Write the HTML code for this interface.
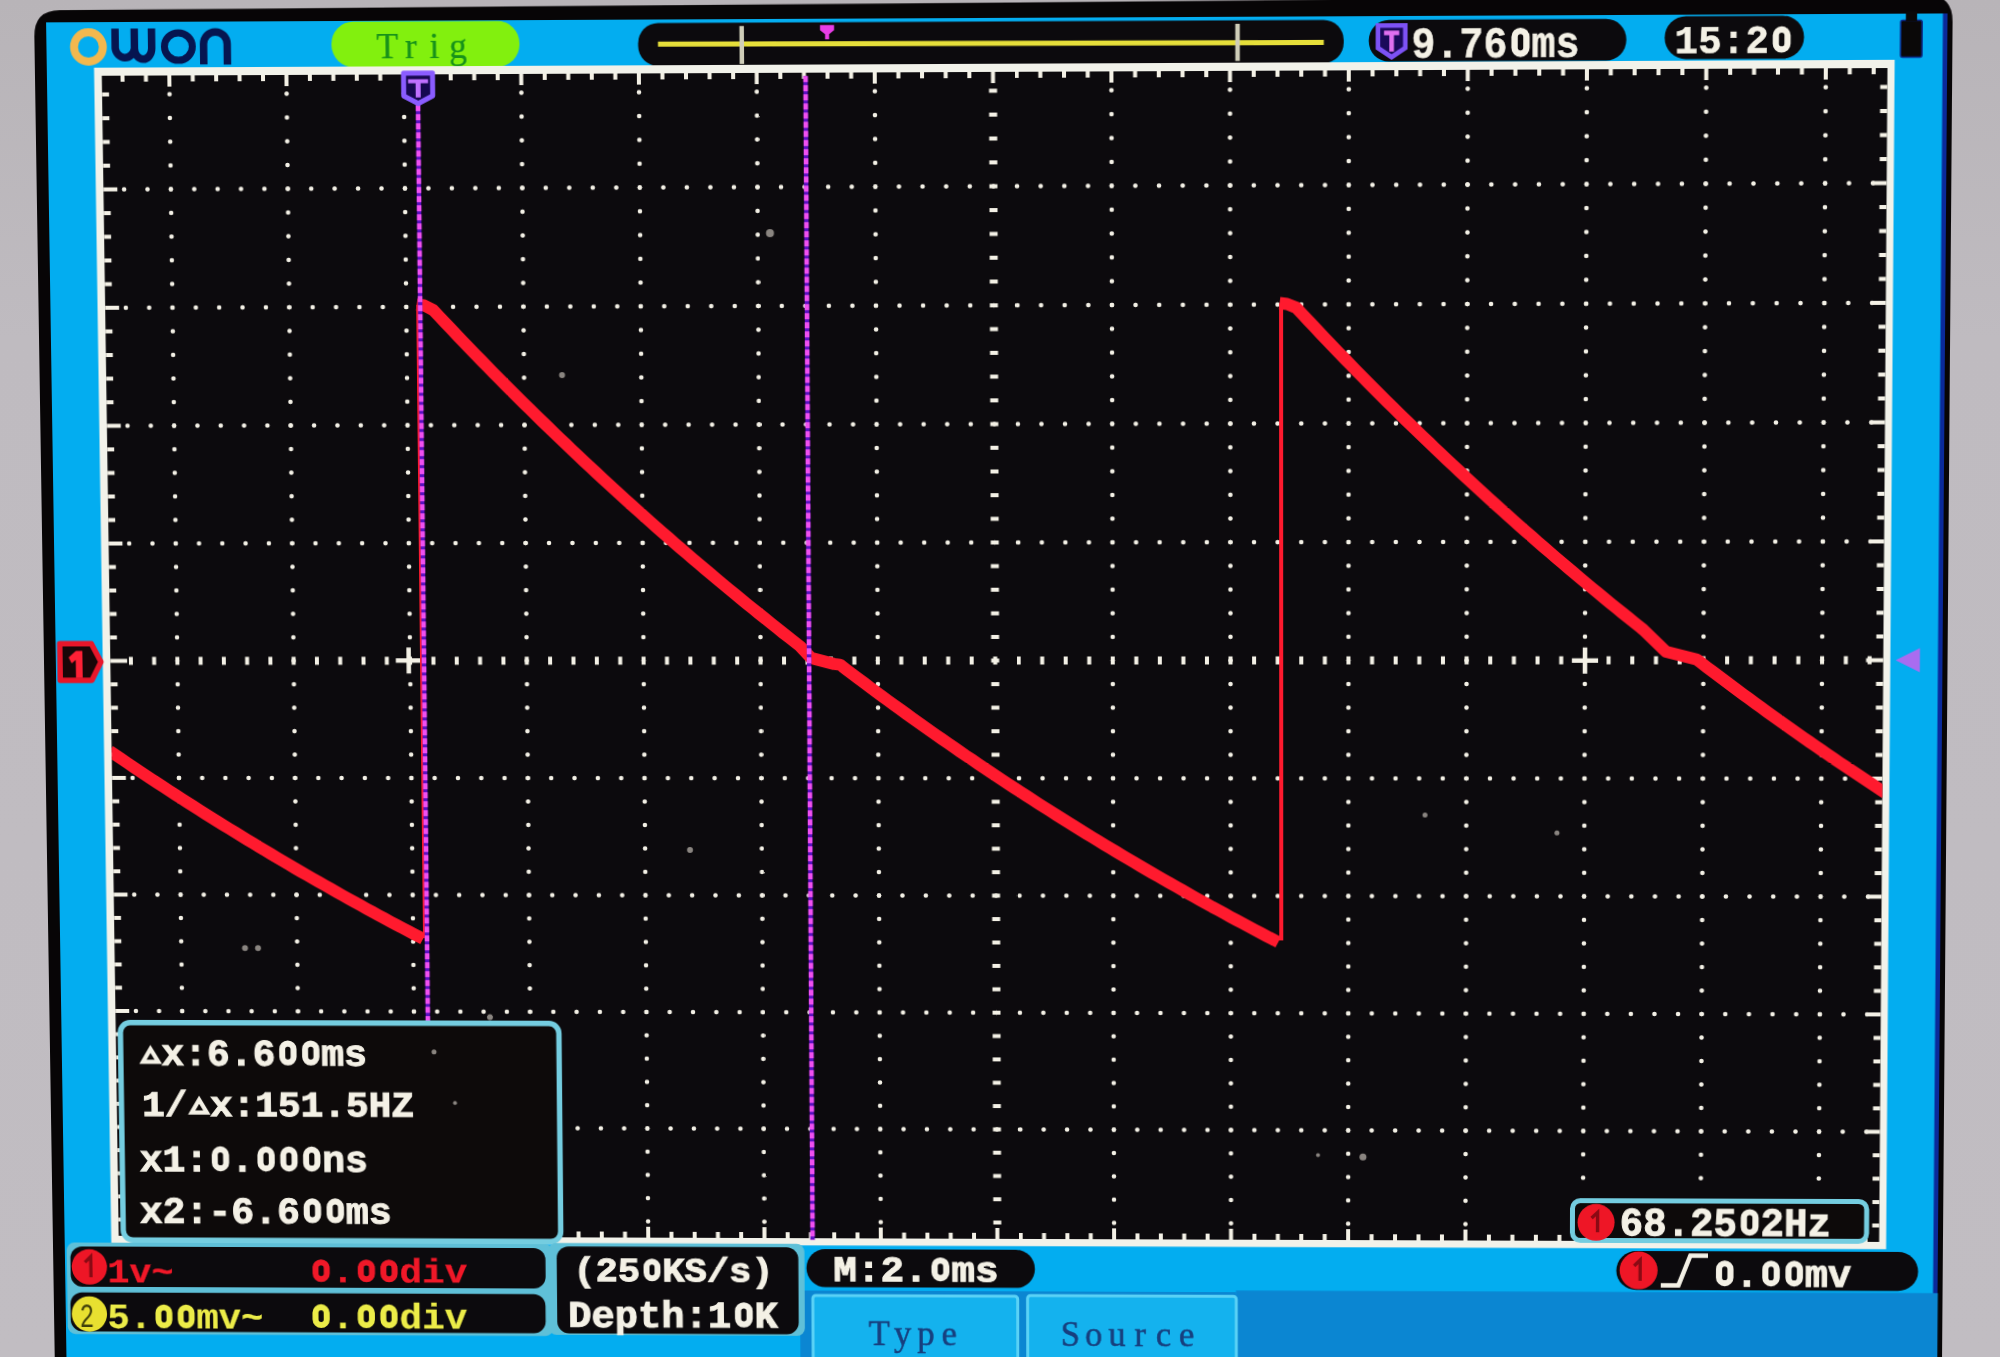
<!DOCTYPE html>
<html><head><meta charset="utf-8"><title>Oscilloscope</title>
<style>
html,body{margin:0;padding:0;overflow:hidden;width:2000px;height:1357px;}
#wrap{position:absolute;left:0;top:0;width:2000px;height:1357px;overflow:hidden;}
body{width:2000px;height:1357px;overflow:hidden;position:relative;background:#c0bcc1;font-family:"Liberation Sans",sans-serif;}
#bg{position:absolute;left:0;top:0;width:2000px;height:1357px;background:linear-gradient(180deg,#b8b4b8 0%,#bfbbc0 25%,#c1bdc2 100%);}
#scene{position:absolute;left:0;top:0;width:2000px;height:1420px;transform-origin:0 0;transform:matrix3d(0.994577479,-0.00482079311,0,-6.70521566e-06,0.0160254902,1.01289187,0,1.22989897e-05,0,0,1,0,-4.04642682,-2.71156599,0,1);}
</style></head><body>
<div id="wrap">
<div id="bg"></div>
<div id="scene">
<svg width="2000" height="1420" viewBox="0 0 2000 1420" style="position:absolute;left:0;top:0">
<path d="M38,1420 V39 Q38,13 64,13 L1916,7 Q1942,7 1942,33 V1420 Z" fill="#070506"/>
<rect x="50" y="25" width="1884" height="1400" fill="#03adf0"/>
<rect x="1932.5" y="25" width="4.5" height="1400" fill="#0a2a9a"/>
<rect x="1235.4" y="1292.3" width="701.9" height="107.6" rx="0" fill="#0b86d2" />
<rect x="796.1" y="1294" width="439.3" height="109.1" rx="0" fill="#0b86d2" />
<circle cx="92.2" cy="49.5" r="14.5" fill="none" stroke="#f2b84e" stroke-width="8"/>
<path d="M119.1,31.4 V51.1 A9.75,10.5 0 0 0 138.4,51.2 V31.5 M138.4,51.2 A8.6,10.5 0 0 0 155.7,51.3 V31.5" fill="none" stroke="#061550" stroke-width="7.5"/>
<ellipse cx="182.5" cy="49.5" rx="14" ry="13.6" fill="none" stroke="#061550" stroke-width="7"/>
<path d="M207.8,67.3 V47.1 A11.7,11.8 0 0 1 231.5,47.2 V67.4" fill="none" stroke="#061550" stroke-width="7.5"/>
<rect x="336" y="25.7" width="188.1" height="45" rx="22" fill="#82f00e" />
<g font-family="Liberation Serif" font-size="35.7" fill="#17921a" stroke="#17921a" stroke-width="0.25" text-anchor="middle"><text x="391.8" y="61.7">T</text><text x="415.4" y="61.7">r</text><text x="439" y="61.7">i</text><text x="462.6" y="61.7">g</text></g>
<rect x="642.5" y="28.4" width="700.5" height="42.4" rx="20" fill="#0c0a0d" />
<line x1="662.3" y1="49.3" x2="1323.3" y2="50.6" stroke="#e6df3a" stroke-width="5"/>
<line x1="745.8" y1="31.8" x2="745.8" y2="69.1" stroke="#cfcdb8" stroke-width="4.5"/>
<line x1="1238" y1="31.9" x2="1238" y2="68.3" stroke="#cfcdb8" stroke-width="4.5"/>
<path d="M823.8,31.2 h14 v5 l-5,4 v5 h-4 v-5 l-5,-4 z" fill="#e83ee6"/>
<rect x="1367.7" y="28.8" width="254" height="40.8" rx="20" fill="#0c0a0d" />
<path d="M1376.8,34.2 h27 v22 l-13.5,9 l-13.5,-9 z" fill="#1a0a5a" stroke="#7d52f5" stroke-width="4.5"/>
<path d="M1382.8,39.2 h15 v4.5 h-5.2 v16 h-4.6 v-16 h-5.2 z" fill="#e070f0"/>
<text transform="translate(1409.8 65.7) scale(0.9207 1)" font-family="Liberation Mono" font-weight="bold" font-size="42.9" fill="#f4f1e6" stroke="#f4f1e6" stroke-width="0.6" xml:space="preserve">9.76 ms</text>
<rect x="1511.6" y="40.1" width="11.7" height="22.4" rx="5.9" fill="none" stroke="#f4f1e6" stroke-width="6.3"/>
<rect x="1659.4" y="26.4" width="137" height="42" rx="21" fill="#0c0a0d" />
<text transform="translate(1669.1 62.4) scale(1.0105 1)" font-family="Liberation Mono" font-weight="bold" font-size="38.3" fill="#f4f1e6" stroke="#f4f1e6" stroke-width="0.6" xml:space="preserve">15:2 </text>
<rect x="1768.7" y="39.9" width="11.5" height="19.5" rx="5.7" fill="none" stroke="#f4f1e6" stroke-width="6.1"/>
<rect x="1891.2" y="31.4" width="21" height="36" rx="2" fill="#0a0808" stroke="#0a2a8a" stroke-width="1.5"/>
<rect x="1896.2" y="22.4" width="11" height="10" fill="#0a0808"/>
<rect x="97.5" y="70" width="1788" height="1178.3" rx="0" fill="#f2f2ea" />
<rect x="105.2" y="78" width="1773.3" height="1163" rx="0" fill="#0c0a0d" />
<g fill="#f4f1e6"><rect x="124" y="78" width="4" height="6"/><rect x="124" y="1235" width="4" height="6"/><rect x="147.5" y="78" width="4" height="6"/><rect x="147.5" y="1235" width="4" height="6"/><rect x="171" y="78" width="4" height="11"/><rect x="171" y="1230" width="4" height="11"/><rect x="194.5" y="78" width="4" height="6"/><rect x="194.5" y="1235" width="4" height="6"/><rect x="218" y="78" width="4" height="6"/><rect x="218" y="1235" width="4" height="6"/><rect x="241.5" y="78" width="4" height="6"/><rect x="241.5" y="1235" width="4" height="6"/><rect x="265" y="78" width="4" height="6"/><rect x="265" y="1235" width="4" height="6"/><rect x="288.5" y="78" width="4" height="11"/><rect x="288.5" y="1230" width="4" height="11"/><rect x="312" y="78" width="4" height="6"/><rect x="312" y="1235" width="4" height="6"/><rect x="335.5" y="78" width="4" height="6"/><rect x="335.5" y="1235" width="4" height="6"/><rect x="359" y="78" width="4" height="6"/><rect x="359" y="1235" width="4" height="6"/><rect x="382.5" y="78" width="4" height="6"/><rect x="382.5" y="1235" width="4" height="6"/><rect x="406" y="78" width="4" height="11"/><rect x="406" y="1230" width="4" height="11"/><rect x="429.5" y="78" width="4" height="6"/><rect x="429.5" y="1235" width="4" height="6"/><rect x="453" y="78" width="4" height="6"/><rect x="453" y="1235" width="4" height="6"/><rect x="476.5" y="78" width="4" height="6"/><rect x="476.5" y="1235" width="4" height="6"/><rect x="500" y="78" width="4" height="6"/><rect x="500" y="1235" width="4" height="6"/><rect x="523.5" y="78" width="4" height="11"/><rect x="523.5" y="1230" width="4" height="11"/><rect x="547" y="78" width="4" height="6"/><rect x="547" y="1235" width="4" height="6"/><rect x="570.5" y="78" width="4" height="6"/><rect x="570.5" y="1235" width="4" height="6"/><rect x="594" y="78" width="4" height="6"/><rect x="594" y="1235" width="4" height="6"/><rect x="617.5" y="78" width="4" height="6"/><rect x="617.5" y="1235" width="4" height="6"/><rect x="641" y="78" width="4" height="11"/><rect x="641" y="1230" width="4" height="11"/><rect x="664.5" y="78" width="4" height="6"/><rect x="664.5" y="1235" width="4" height="6"/><rect x="688" y="78" width="4" height="6"/><rect x="688" y="1235" width="4" height="6"/><rect x="711.5" y="78" width="4" height="6"/><rect x="711.5" y="1235" width="4" height="6"/><rect x="735" y="78" width="4" height="6"/><rect x="735" y="1235" width="4" height="6"/><rect x="758.5" y="78" width="4" height="11"/><rect x="758.5" y="1230" width="4" height="11"/><rect x="782" y="78" width="4" height="6"/><rect x="782" y="1235" width="4" height="6"/><rect x="805.5" y="78" width="4" height="6"/><rect x="805.5" y="1235" width="4" height="6"/><rect x="829" y="78" width="4" height="6"/><rect x="829" y="1235" width="4" height="6"/><rect x="852.5" y="78" width="4" height="6"/><rect x="852.5" y="1235" width="4" height="6"/><rect x="876" y="78" width="4" height="11"/><rect x="876" y="1230" width="4" height="11"/><rect x="899.5" y="78" width="4" height="6"/><rect x="899.5" y="1235" width="4" height="6"/><rect x="923" y="78" width="4" height="6"/><rect x="923" y="1235" width="4" height="6"/><rect x="946.5" y="78" width="4" height="6"/><rect x="946.5" y="1235" width="4" height="6"/><rect x="970" y="78" width="4" height="6"/><rect x="970" y="1235" width="4" height="6"/><rect x="993.5" y="78" width="4" height="11"/><rect x="993.5" y="1230" width="4" height="11"/><rect x="1017" y="78" width="4" height="6"/><rect x="1017" y="1235" width="4" height="6"/><rect x="1040.5" y="78" width="4" height="6"/><rect x="1040.5" y="1235" width="4" height="6"/><rect x="1064" y="78" width="4" height="6"/><rect x="1064" y="1235" width="4" height="6"/><rect x="1087.5" y="78" width="4" height="6"/><rect x="1087.5" y="1235" width="4" height="6"/><rect x="1111" y="78" width="4" height="11"/><rect x="1111" y="1230" width="4" height="11"/><rect x="1134.5" y="78" width="4" height="6"/><rect x="1134.5" y="1235" width="4" height="6"/><rect x="1158" y="78" width="4" height="6"/><rect x="1158" y="1235" width="4" height="6"/><rect x="1181.5" y="78" width="4" height="6"/><rect x="1181.5" y="1235" width="4" height="6"/><rect x="1205" y="78" width="4" height="6"/><rect x="1205" y="1235" width="4" height="6"/><rect x="1228.5" y="78" width="4" height="11"/><rect x="1228.5" y="1230" width="4" height="11"/><rect x="1252" y="78" width="4" height="6"/><rect x="1252" y="1235" width="4" height="6"/><rect x="1275.5" y="78" width="4" height="6"/><rect x="1275.5" y="1235" width="4" height="6"/><rect x="1299" y="78" width="4" height="6"/><rect x="1299" y="1235" width="4" height="6"/><rect x="1322.5" y="78" width="4" height="6"/><rect x="1322.5" y="1235" width="4" height="6"/><rect x="1346" y="78" width="4" height="11"/><rect x="1346" y="1230" width="4" height="11"/><rect x="1369.5" y="78" width="4" height="6"/><rect x="1369.5" y="1235" width="4" height="6"/><rect x="1393" y="78" width="4" height="6"/><rect x="1393" y="1235" width="4" height="6"/><rect x="1416.5" y="78" width="4" height="6"/><rect x="1416.5" y="1235" width="4" height="6"/><rect x="1440" y="78" width="4" height="6"/><rect x="1440" y="1235" width="4" height="6"/><rect x="1463.5" y="78" width="4" height="11"/><rect x="1463.5" y="1230" width="4" height="11"/><rect x="1487" y="78" width="4" height="6"/><rect x="1487" y="1235" width="4" height="6"/><rect x="1510.5" y="78" width="4" height="6"/><rect x="1510.5" y="1235" width="4" height="6"/><rect x="1534" y="78" width="4" height="6"/><rect x="1534" y="1235" width="4" height="6"/><rect x="1557.5" y="78" width="4" height="6"/><rect x="1557.5" y="1235" width="4" height="6"/><rect x="1581" y="78" width="4" height="11"/><rect x="1581" y="1230" width="4" height="11"/><rect x="1604.5" y="78" width="4" height="6"/><rect x="1604.5" y="1235" width="4" height="6"/><rect x="1628" y="78" width="4" height="6"/><rect x="1628" y="1235" width="4" height="6"/><rect x="1651.5" y="78" width="4" height="6"/><rect x="1651.5" y="1235" width="4" height="6"/><rect x="1675" y="78" width="4" height="6"/><rect x="1675" y="1235" width="4" height="6"/><rect x="1698.5" y="78" width="4" height="11"/><rect x="1698.5" y="1230" width="4" height="11"/><rect x="1722" y="78" width="4" height="6"/><rect x="1722" y="1235" width="4" height="6"/><rect x="1745.5" y="78" width="4" height="6"/><rect x="1745.5" y="1235" width="4" height="6"/><rect x="1769" y="78" width="4" height="6"/><rect x="1769" y="1235" width="4" height="6"/><rect x="1792.5" y="78" width="4" height="6"/><rect x="1792.5" y="1235" width="4" height="6"/><rect x="1816" y="78" width="4" height="11"/><rect x="1816" y="1230" width="4" height="11"/><rect x="1839.5" y="78" width="4" height="6"/><rect x="1839.5" y="1235" width="4" height="6"/><rect x="1863" y="78" width="4" height="6"/><rect x="1863" y="1235" width="4" height="6"/><rect x="105.2" y="94.5" width="7" height="4"/><rect x="1871.5" y="94.5" width="7" height="4"/><rect x="105.2" y="118" width="7" height="4"/><rect x="1871.5" y="118" width="7" height="4"/><rect x="105.2" y="141.5" width="7" height="4"/><rect x="1871.5" y="141.5" width="7" height="4"/><rect x="105.2" y="165" width="7" height="4"/><rect x="1871.5" y="165" width="7" height="4"/><rect x="105.2" y="188.5" width="14" height="4"/><rect x="1864.5" y="188.5" width="14" height="4"/><rect x="105.2" y="212" width="7" height="4"/><rect x="1871.5" y="212" width="7" height="4"/><rect x="105.2" y="235.5" width="7" height="4"/><rect x="1871.5" y="235.5" width="7" height="4"/><rect x="105.2" y="259" width="7" height="4"/><rect x="1871.5" y="259" width="7" height="4"/><rect x="105.2" y="282.5" width="7" height="4"/><rect x="1871.5" y="282.5" width="7" height="4"/><rect x="105.2" y="306" width="14" height="4"/><rect x="1864.5" y="306" width="14" height="4"/><rect x="105.2" y="329.5" width="7" height="4"/><rect x="1871.5" y="329.5" width="7" height="4"/><rect x="105.2" y="353" width="7" height="4"/><rect x="1871.5" y="353" width="7" height="4"/><rect x="105.2" y="376.5" width="7" height="4"/><rect x="1871.5" y="376.5" width="7" height="4"/><rect x="105.2" y="400" width="7" height="4"/><rect x="1871.5" y="400" width="7" height="4"/><rect x="105.2" y="423.5" width="14" height="4"/><rect x="1864.5" y="423.5" width="14" height="4"/><rect x="105.2" y="447" width="7" height="4"/><rect x="1871.5" y="447" width="7" height="4"/><rect x="105.2" y="470.5" width="7" height="4"/><rect x="1871.5" y="470.5" width="7" height="4"/><rect x="105.2" y="494" width="7" height="4"/><rect x="1871.5" y="494" width="7" height="4"/><rect x="105.2" y="517.5" width="7" height="4"/><rect x="1871.5" y="517.5" width="7" height="4"/><rect x="105.2" y="541" width="14" height="4"/><rect x="1864.5" y="541" width="14" height="4"/><rect x="105.2" y="564.5" width="7" height="4"/><rect x="1871.5" y="564.5" width="7" height="4"/><rect x="105.2" y="588" width="7" height="4"/><rect x="1871.5" y="588" width="7" height="4"/><rect x="105.2" y="611.5" width="7" height="4"/><rect x="1871.5" y="611.5" width="7" height="4"/><rect x="105.2" y="635" width="7" height="4"/><rect x="1871.5" y="635" width="7" height="4"/><rect x="105.2" y="658.5" width="17" height="4"/><rect x="1861.5" y="658.5" width="17" height="4"/><rect x="105.2" y="682" width="7" height="4"/><rect x="1871.5" y="682" width="7" height="4"/><rect x="105.2" y="705.5" width="7" height="4"/><rect x="1871.5" y="705.5" width="7" height="4"/><rect x="105.2" y="729" width="7" height="4"/><rect x="1871.5" y="729" width="7" height="4"/><rect x="105.2" y="752.5" width="7" height="4"/><rect x="1871.5" y="752.5" width="7" height="4"/><rect x="105.2" y="776" width="14" height="4"/><rect x="1864.5" y="776" width="14" height="4"/><rect x="105.2" y="799.5" width="7" height="4"/><rect x="1871.5" y="799.5" width="7" height="4"/><rect x="105.2" y="823" width="7" height="4"/><rect x="1871.5" y="823" width="7" height="4"/><rect x="105.2" y="846.5" width="7" height="4"/><rect x="1871.5" y="846.5" width="7" height="4"/><rect x="105.2" y="870" width="7" height="4"/><rect x="1871.5" y="870" width="7" height="4"/><rect x="105.2" y="893.5" width="14" height="4"/><rect x="1864.5" y="893.5" width="14" height="4"/><rect x="105.2" y="917" width="7" height="4"/><rect x="1871.5" y="917" width="7" height="4"/><rect x="105.2" y="940.5" width="7" height="4"/><rect x="1871.5" y="940.5" width="7" height="4"/><rect x="105.2" y="964" width="7" height="4"/><rect x="1871.5" y="964" width="7" height="4"/><rect x="105.2" y="987.5" width="7" height="4"/><rect x="1871.5" y="987.5" width="7" height="4"/><rect x="105.2" y="1011" width="14" height="4"/><rect x="1864.5" y="1011" width="14" height="4"/><rect x="105.2" y="1034.5" width="7" height="4"/><rect x="1871.5" y="1034.5" width="7" height="4"/><rect x="105.2" y="1058" width="7" height="4"/><rect x="1871.5" y="1058" width="7" height="4"/><rect x="105.2" y="1081.5" width="7" height="4"/><rect x="1871.5" y="1081.5" width="7" height="4"/><rect x="105.2" y="1105" width="7" height="4"/><rect x="1871.5" y="1105" width="7" height="4"/><rect x="105.2" y="1128.5" width="14" height="4"/><rect x="1864.5" y="1128.5" width="14" height="4"/><rect x="105.2" y="1152" width="7" height="4"/><rect x="1871.5" y="1152" width="7" height="4"/><rect x="105.2" y="1175.5" width="7" height="4"/><rect x="1871.5" y="1175.5" width="7" height="4"/><rect x="105.2" y="1199" width="7" height="4"/><rect x="1871.5" y="1199" width="7" height="4"/><rect x="105.2" y="1222.5" width="7" height="4"/><rect x="1871.5" y="1222.5" width="7" height="4"/></g>
<g stroke="#f4f1e6"><line x1="173" y1="96.5" x2="173" y2="1225.5" stroke-width="4.6" stroke-linecap="round" stroke-dasharray="0.01 23.49"/><line x1="290.5" y1="96.5" x2="290.5" y2="1225.5" stroke-width="4.6" stroke-linecap="round" stroke-dasharray="0.01 23.49"/><line x1="408" y1="96.5" x2="408" y2="1225.5" stroke-width="4.6" stroke-linecap="round" stroke-dasharray="0.01 23.49"/><line x1="525.5" y1="96.5" x2="525.5" y2="1225.5" stroke-width="4.6" stroke-linecap="round" stroke-dasharray="0.01 23.49"/><line x1="643" y1="96.5" x2="643" y2="1225.5" stroke-width="4.6" stroke-linecap="round" stroke-dasharray="0.01 23.49"/><line x1="760.5" y1="96.5" x2="760.5" y2="1225.5" stroke-width="4.6" stroke-linecap="round" stroke-dasharray="0.01 23.49"/><line x1="878" y1="96.5" x2="878" y2="1225.5" stroke-width="4.6" stroke-linecap="round" stroke-dasharray="0.01 23.49"/><line x1="995.5" y1="94.5" x2="995.5" y2="1226.5" stroke-width="8" stroke-dasharray="4 19.5"/><line x1="1113" y1="96.5" x2="1113" y2="1225.5" stroke-width="4.6" stroke-linecap="round" stroke-dasharray="0.01 23.49"/><line x1="1230.5" y1="96.5" x2="1230.5" y2="1225.5" stroke-width="4.6" stroke-linecap="round" stroke-dasharray="0.01 23.49"/><line x1="1348" y1="96.5" x2="1348" y2="1225.5" stroke-width="4.6" stroke-linecap="round" stroke-dasharray="0.01 23.49"/><line x1="1465.5" y1="96.5" x2="1465.5" y2="1225.5" stroke-width="4.6" stroke-linecap="round" stroke-dasharray="0.01 23.49"/><line x1="1583" y1="96.5" x2="1583" y2="1225.5" stroke-width="4.6" stroke-linecap="round" stroke-dasharray="0.01 23.49"/><line x1="1700.5" y1="96.5" x2="1700.5" y2="1225.5" stroke-width="4.6" stroke-linecap="round" stroke-dasharray="0.01 23.49"/><line x1="1818" y1="96.5" x2="1818" y2="1225.5" stroke-width="4.6" stroke-linecap="round" stroke-dasharray="0.01 23.49"/><line x1="126" y1="190.5" x2="1866" y2="190.5" stroke-width="4.6" stroke-linecap="round" stroke-dasharray="0.01 23.49"/><line x1="126" y1="308" x2="1866" y2="308" stroke-width="4.6" stroke-linecap="round" stroke-dasharray="0.01 23.49"/><line x1="126" y1="425.5" x2="1866" y2="425.5" stroke-width="4.6" stroke-linecap="round" stroke-dasharray="0.01 23.49"/><line x1="126" y1="543" x2="1866" y2="543" stroke-width="4.6" stroke-linecap="round" stroke-dasharray="0.01 23.49"/><line x1="124" y1="660.5" x2="1867" y2="660.5" stroke-width="8" stroke-dasharray="4 19.5"/><line x1="126" y1="778" x2="1866" y2="778" stroke-width="4.6" stroke-linecap="round" stroke-dasharray="0.01 23.49"/><line x1="126" y1="895.5" x2="1866" y2="895.5" stroke-width="4.6" stroke-linecap="round" stroke-dasharray="0.01 23.49"/><line x1="126" y1="1013" x2="1866" y2="1013" stroke-width="4.6" stroke-linecap="round" stroke-dasharray="0.01 23.49"/><line x1="126" y1="1130.5" x2="1866" y2="1130.5" stroke-width="4.6" stroke-linecap="round" stroke-dasharray="0.01 23.49"/></g>
<path d="M393.6,660.2 h26 M406.6,647.2 v26" stroke="#f4f1e6" stroke-width="4.5"/>
<path d="M1570.1,660.7 h26 M1583.1,647.7 v26" stroke="#f4f1e6" stroke-width="4.5"/>
<clipPath id="gclip"><rect x="105.2" y="78" width="1773.3" height="1163"/></clipPath>
<g clip-path="url(#gclip)" fill="none" stroke="#ff1a2e" stroke-linejoin="round" stroke-linecap="butt">
<polyline points="103.2,750.9 109.2,755 115.2,759 121.2,763.1 127.2,767.2 133.2,771.2 139.2,775.2 145.2,779.2 151.2,783.1 157.2,787.1 163.2,791 169.2,794.9 175.2,798.8 181.2,802.6 187.2,806.4 193.2,810.3 199.2,814.1 205.2,817.8 211.2,821.6 217.2,825.3 223.2,829 229.2,832.7 235.2,836.4 241.2,840.1 247.2,843.7 253.2,847.3 259.2,850.9 265.2,854.5 271.2,858.1 277.2,861.6 283.2,865.2 289.2,868.7 295.2,872.2 301.2,875.6 307.2,879.1 313.2,882.5 319.2,885.9 325.2,889.3 331.2,892.7 337.2,896.1 343.2,899.4 349.2,902.8 355.2,906.1 361.2,909.4 367.2,912.6 373.2,915.9 379.2,919.1 385.2,922.4 391.2,925.6 397.2,928.8 403.2,931.9 409.2,935.1 415.2,938.2 418,939.7" stroke-width="12"/>
<polyline points="418.5,305.5 426,306.5 435,311.1 441,317.5 447,323.9 453,330.2 459,336.6 465,342.8 471,349.1 477,355.3 483,361.5 489,367.6 495,373.8 501,379.9 507,385.9 513,391.9 519,397.9 525,403.9 531,409.8 537,415.7 543,421.6 549,427.4 555,433.2 561,439 567,444.7 573,450.5 579,456.1 585,461.8 591,467.4 597,473 603,478.6 609,484.1 615,489.6 621,495.1 627,500.6 633,506 639,511.4 645,516.7 651,522.1 657,527.4 663,532.7 669,537.9 675,543.2 681,548.4 687,553.5 693,558.7 699,563.8 705,568.9 711,573.9 717,579 723,584 729,589 735,593.9 741,598.9 747,603.8 753,608.6 759,613.5 765,618.3 771,623.1 777,627.9 783,632.7 789,637.4 795,642.1 800.1,646.1 811.1,657.9 834.1,663.9 840.1,664.6 846.1,669.2 852.1,673.7 858.1,678.3 864.1,682.7 870.1,687.2 876.1,691.7 882.1,696.1 888.1,700.5 894.1,704.8 900.1,709.2 906.1,713.5 912.1,717.8 918.1,722.1 924.1,726.4 930.1,730.6 936.1,734.8 942.1,739 948.1,743.2 954.1,747.3 960.1,751.5 966.1,755.6 972.1,759.6 978.1,763.7 984.1,767.7 990.1,771.8 996.1,775.8 1002.1,779.7 1008.1,783.7 1014.1,787.6 1020.1,791.5 1026.1,795.4 1032.1,799.3 1038.1,803.2 1044.1,807 1050.1,810.8 1056.1,814.6 1062.1,818.4 1068.1,822.1 1074.1,825.9 1080.1,829.6 1086.1,833.3 1092.1,837 1098.1,840.6 1104.1,844.3 1110.1,847.9 1116.1,851.5 1122.1,855.1 1128.1,858.6 1134.1,862.2 1140.1,865.7 1146.1,869.2 1152.1,872.7 1158.1,876.1 1164.1,879.6 1170.1,883 1176.1,886.4 1182.1,889.8 1188.1,893.2 1194.1,896.6 1200.1,899.9 1206.1,903.2 1212.1,906.6 1218.1,909.8 1224.1,913.1 1230.1,916.4 1236.1,919.6 1242.1,922.8 1248.1,926 1254.1,929.2 1260.1,932.4 1266.1,935.6 1272.1,938.7 1278,941.8" stroke-width="12"/>
<polyline points="1279.5,306.5 1287,307.5 1296,311.1 1302,317.5 1308,323.9 1314,330.2 1320,336.6 1326,342.8 1332,349.1 1338,355.3 1344,361.5 1350,367.6 1356,373.8 1362,379.9 1368,385.9 1374,391.9 1380,397.9 1386,403.9 1392,409.8 1398,415.7 1404,421.6 1410,427.4 1416,433.2 1422,439 1428,444.7 1434,450.5 1440,456.1 1446,461.8 1452,467.4 1458,473 1464,478.6 1470,484.1 1476,489.6 1482,495.1 1488,500.6 1494,506 1500,511.4 1506,516.7 1512,522.1 1518,527.4 1524,532.7 1530,537.9 1536,543.2 1542,548.4 1548,553.5 1554,558.7 1560,563.8 1566,568.9 1572,573.9 1578,579 1584,584 1590,589 1596,593.9 1602,598.9 1608,603.8 1614,608.6 1620,613.5 1626,618.3 1632,623.1 1638,627.9 1640.6,630 1663.4,652 1694,659.7 1698,662.8 1704,667.4 1710,671.9 1716,676.4 1722,680.9 1728,685.4 1734,689.9 1740,694.3 1746,698.7 1752,703.1 1758,707.4 1764,711.8 1770,716.1 1776,720.4 1782,724.6 1788,728.9 1794,733.1 1800,737.3 1806,741.5 1812,745.7 1818,749.8 1824,753.9 1830,758 1836,762.1 1842,766.1 1848,770.1 1854,774.1 1860,778.1 1866,782.1 1872,786 1878,790 1881.5,792.3" stroke-width="12"/>
<line x1="420" y1="306" x2="420" y2="939" stroke-width="4"/>
<line x1="1281" y1="307" x2="1281" y2="940" stroke-width="4"/>
</g>
<line x1="422" y1="108.2" x2="422" y2="1023.5" stroke="#5a10c0" stroke-width="4.5"/>
<line x1="422" y1="108.2" x2="422" y2="1023.5" stroke="#f050f0" stroke-width="4.5" stroke-dasharray="6 3"/>
<line x1="809.1" y1="81.2" x2="809.1" y2="1242.8" stroke="#5a10c0" stroke-width="4.5"/>
<line x1="809.1" y1="81.2" x2="809.1" y2="1242.8" stroke="#f050f0" stroke-width="4.5" stroke-dasharray="6 3"/>
<path d="M407.8,76.8 h29 v22.5 l-14.5,7.5 l-14.5,-7.5 z" fill="#160850" stroke="#8a5cff" stroke-width="5" stroke-linejoin="round"/>
<path d="M412.3,82.8 h20 v4 h-7.5 v14 h-5 v-14 h-7.5 z" fill="#c070ff"/>
<path d="M54.2,643.3 h32 l9.5,18.3 l-9.5,18.3 h-32 z" fill="#1a0608" stroke="#e8162a" stroke-width="5.5" stroke-linejoin="round"/>
<path d="M63,657.1 l7.5,-6.5 h6.5 v27 h-6.8 v-18.2 l-4.2,3.6 z" fill="#ff2035"/>
<path d="M1890.7,660.4 l24,-12 v24 z" fill="#a96cf0"/>
<rect x="109.9" y="1024.8" width="444.5" height="220.5" rx="10" fill="#0d0a0a" stroke="#74cde0" stroke-width="5.5"/>
<text transform="translate(128 1067.8) scale(1.0225 1)" font-family="Liberation Mono" font-weight="bold" font-size="37.8" fill="#f4f1e6" stroke="#f4f1e6" stroke-width="1.1" xml:space="preserve"> x:6.6  ms</text>
<rect x="274" y="1045.6" width="11.5" height="19.2" rx="5.7" fill="none" stroke="#f4f1e6" stroke-width="6.1"/>
<rect x="297.2" y="1045.6" width="11.5" height="19.2" rx="5.7" fill="none" stroke="#f4f1e6" stroke-width="6.1"/>
<path d="M132.4,1064.3 L148.1,1064.3 L140.2,1051.3 Z" fill="none" stroke="#f4f1e6" stroke-width="4.2" stroke-linejoin="miter"/>
<text transform="translate(130.9 1119.1) scale(1.0597 1)" font-family="Liberation Mono" font-weight="bold" font-size="36.2" fill="#f4f1e6" stroke="#f4f1e6" stroke-width="1.1" xml:space="preserve">1/ x:151.5HZ</text>
<path d="M181.2,1115.6 L196.7,1115.6 L189,1102.6 Z" fill="none" stroke="#f4f1e6" stroke-width="4.2" stroke-linejoin="miter"/>
<text transform="translate(127.7 1175.1) scale(1.0225 1)" font-family="Liberation Mono" font-weight="bold" font-size="37.8" fill="#f4f1e6" stroke="#f4f1e6" stroke-width="1.1" xml:space="preserve">x1: .   ns</text>
<rect x="204.1" y="1152.9" width="11.5" height="19.2" rx="5.7" fill="none" stroke="#f4f1e6" stroke-width="6.1"/>
<rect x="250.5" y="1152.9" width="11.5" height="19.2" rx="5.7" fill="none" stroke="#f4f1e6" stroke-width="6.1"/>
<rect x="273.7" y="1152.9" width="11.5" height="19.2" rx="5.7" fill="none" stroke="#f4f1e6" stroke-width="6.1"/>
<rect x="296.9" y="1152.9" width="11.5" height="19.2" rx="5.7" fill="none" stroke="#f4f1e6" stroke-width="6.1"/>
<text transform="translate(127 1227.6) scale(1.0269 1)" font-family="Liberation Mono" font-weight="bold" font-size="37.8" fill="#f4f1e6" stroke="#f4f1e6" stroke-width="1.1" xml:space="preserve">x2:-6.6  ms</text>
<rect x="296.9" y="1205.4" width="11.5" height="19.1" rx="5.8" fill="none" stroke="#f4f1e6" stroke-width="6.2"/>
<rect x="320.2" y="1205.4" width="11.5" height="19.1" rx="5.8" fill="none" stroke="#f4f1e6" stroke-width="6.2"/>
<rect x="1572.5" y="1200.4" width="293.4" height="40.2" rx="8" fill="#0d0a0a" stroke="#74cde0" stroke-width="5"/>
<circle cx="1596.1" cy="1222.3" r="18.5" fill="#ee1626"/>
<path d="M1591.6,1217.9 L1597.6,1212.3 V1232.3" fill="none" stroke="#8a0a14" stroke-width="3.4" stroke-linejoin="miter"/>
<text transform="translate(1619.7 1235.2) scale(0.9735 1)" font-family="Liberation Mono" font-weight="bold" font-size="40.1" fill="#f4f1e6" stroke="#f4f1e6" stroke-width="1.1" xml:space="preserve">68.25 2Hz</text>
<rect x="1743.6" y="1211.5" width="11.6" height="20.6" rx="5.8" fill="none" stroke="#f4f1e6" stroke-width="6.2"/>
<rect x="51.8" y="1248.1" width="494.3" height="93.1" rx="8" fill="#5fc0d8" />
<rect x="55.6" y="1252.1" width="483.1" height="40.9" rx="12" fill="#0c0a0d" />
<rect x="54.9" y="1298.8" width="483.4" height="39.6" rx="12" fill="#0c0a0d" />
<circle cx="74.8" cy="1272.8" r="18" fill="#ee1626"/>
<path d="M70.3,1268.1 L76.3,1262.3 V1283.3" fill="none" stroke="#8a0a14" stroke-width="3.4" stroke-linejoin="miter"/>
<circle cx="74.1" cy="1320.7" r="18" fill="#e8e030"/>
<text transform="translate(64.6 1334) scale(0.7602 1)" font-family="Liberation Sans" font-weight="normal" font-size="32.9" fill="#40400a" xml:space="preserve">2</text>
<text transform="translate(93.1 1288.3) scale(1.0908 1)" font-family="Liberation Mono" font-weight="bold" font-size="34.4" fill="#f01828" stroke="#f01828" stroke-width="0.3" xml:space="preserve">1v~</text>
<text transform="translate(298.3 1287.3) scale(1.1150 1)" font-family="Liberation Mono" font-weight="bold" font-size="34.4" fill="#f01828" stroke="#f01828" stroke-width="0.3" xml:space="preserve"> .  div</text>
<rect x="305.1" y="1267.3" width="11.4" height="16.9" rx="5.7" fill="none" stroke="#f01828" stroke-width="6.1"/>
<rect x="351.1" y="1267.3" width="11.4" height="16.9" rx="5.7" fill="none" stroke="#f01828" stroke-width="6.1"/>
<rect x="374.1" y="1267.3" width="11.4" height="16.9" rx="5.7" fill="none" stroke="#f01828" stroke-width="6.1"/>
<text transform="translate(92.4 1334.9) scale(1.0459 1)" font-family="Liberation Mono" font-weight="bold" font-size="36.2" fill="#ecec48" stroke="#ecec48" stroke-width="0.3" xml:space="preserve">5.  mv~</text>
<rect x="144.5" y="1313.7" width="11.2" height="18.2" rx="5.6" fill="none" stroke="#ecec48" stroke-width="6"/>
<rect x="167.2" y="1313.7" width="11.2" height="18.2" rx="5.6" fill="none" stroke="#ecec48" stroke-width="6"/>
<text transform="translate(297.8 1334.1) scale(1.0597 1)" font-family="Liberation Mono" font-weight="bold" font-size="36.2" fill="#ecec48" stroke="#ecec48" stroke-width="0.3" xml:space="preserve"> .  div</text>
<rect x="304.5" y="1312.9" width="11.4" height="18.1" rx="5.7" fill="none" stroke="#ecec48" stroke-width="6.1"/>
<rect x="350.5" y="1312.9" width="11.4" height="18.1" rx="5.7" fill="none" stroke="#ecec48" stroke-width="6.1"/>
<rect x="373.5" y="1312.9" width="11.4" height="18.1" rx="5.7" fill="none" stroke="#ecec48" stroke-width="6.1"/>
<rect x="541.4" y="1246.8" width="259.4" height="93.3" rx="8" fill="#5fc0d8" />
<rect x="550.1" y="1250.3" width="244.5" height="88.2" rx="12" fill="#0c0a0d" />
<text transform="translate(566.9 1285.2) scale(1.0908 1)" font-family="Liberation Mono" font-weight="bold" font-size="34.4" fill="#f4f1e6" stroke="#f4f1e6" stroke-width="1.1" xml:space="preserve">(25 KS/s)</text>
<rect x="641" y="1265.2" width="11.1" height="17" rx="5.6" fill="none" stroke="#f4f1e6" stroke-width="6"/>
<text transform="translate(561.2 1331.8) scale(1.0319 1)" font-family="Liberation Mono" font-weight="bold" font-size="38.1" fill="#f4f1e6" stroke="#f4f1e6" stroke-width="1.1" xml:space="preserve">Depth:1 K</text>
<rect x="733.3" y="1309.4" width="11.7" height="19.2" rx="5.8" fill="none" stroke="#f4f1e6" stroke-width="6.3"/>
<rect x="802.8" y="1252" width="230.4" height="38.6" rx="19" fill="#0c0a0d" />
<text transform="translate(829.9 1284.2) scale(1.0966 1)" font-family="Liberation Mono" font-weight="bold" font-size="36.2" fill="#f4f1e6" stroke="#f4f1e6" stroke-width="1.1" xml:space="preserve">M:2. ms</text>
<rect x="932.1" y="1263.1" width="11.8" height="17.9" rx="5.9" fill="none" stroke="#f4f1e6" stroke-width="6.3"/>
<rect x="809" y="1299" width="206.7" height="105.1" rx="3" fill="#14b2ee" stroke="#5ad2f6" stroke-width="3"/>
<rect x="1025.7" y="1298.2" width="210" height="104.9" rx="3" fill="#14b2ee" stroke="#5ad2f6" stroke-width="3"/>
<g font-family="Liberation Serif" font-size="35.1" fill="#173f7e" stroke="#173f7e" stroke-width="0.5" text-anchor="middle"><text x="876" y="1349">T</text><text x="899.5" y="1349">y</text><text x="923" y="1349">p</text><text x="946.5" y="1349">e</text></g>
<g font-family="Liberation Serif" font-size="34.8" fill="#173f7e" stroke="#173f7e" stroke-width="0.5" text-anchor="middle"><text x="1068.8" y="1348.8">S</text><text x="1092.2" y="1348.8">o</text><text x="1115.6" y="1348.8">u</text><text x="1139" y="1348.8">r</text><text x="1162.4" y="1348.8">c</text><text x="1185.8" y="1348.8">e</text></g>
<rect x="1616.5" y="1251.1" width="301" height="39.1" rx="20" fill="#0c0a0d" />
<circle cx="1638.8" cy="1270.6" r="19" fill="#ee1626"/>
<path d="M1634.3,1266 L1640.3,1260.1 V1281.1" fill="none" stroke="#8a0a14" stroke-width="3.4" stroke-linejoin="miter"/>
<polyline points="1661,1285.5 1678.6,1285.4 1690.4,1255.5 1708,1255.5" fill="none" stroke="#f4f1e6" stroke-width="4.5"/>
<text transform="translate(1712.3 1286.2) scale(0.9945 1)" font-family="Liberation Mono" font-weight="bold" font-size="38.7" fill="#f4f1e6" stroke="#f4f1e6" stroke-width="1.1" xml:space="preserve"> .  mv</text>
<rect x="1719.1" y="1263.3" width="11.4" height="19.8" rx="5.7" fill="none" stroke="#f4f1e6" stroke-width="6.1"/>
<rect x="1765.3" y="1263.3" width="11.4" height="19.8" rx="5.7" fill="none" stroke="#f4f1e6" stroke-width="6.1"/>
<rect x="1788.4" y="1263.3" width="11.4" height="19.8" rx="5.7" fill="none" stroke="#f4f1e6" stroke-width="6.1"/>
<circle cx="772.7" cy="235.9" r="4" fill="#8a8580"/>
<circle cx="563.6" cy="375.9" r="3" fill="#8a8580"/>
<circle cx="1362.8" cy="1157.3" r="3.5" fill="#8a8580"/>
<circle cx="237.6" cy="949.2" r="3" fill="#8a8580"/>
<circle cx="250.8" cy="949.2" r="3" fill="#8a8580"/>
<circle cx="484.9" cy="1018.4" r="3" fill="#8a8580"/>
<circle cx="1424.4" cy="814.5" r="2.5" fill="#8a8580"/>
<circle cx="688.2" cy="850" r="3" fill="#8a8580"/>
<circle cx="1555.8" cy="832.3" r="2.5" fill="#8a8580"/>
<circle cx="1317.8" cy="1155.4" r="2" fill="#8a8580"/>
<circle cx="427.9" cy="1053.8" r="2.5" fill="#8a8580"/>
<circle cx="448.6" cy="1105.3" r="2" fill="#8a8580"/>
</svg>
</div>
</div>
</body></html>
